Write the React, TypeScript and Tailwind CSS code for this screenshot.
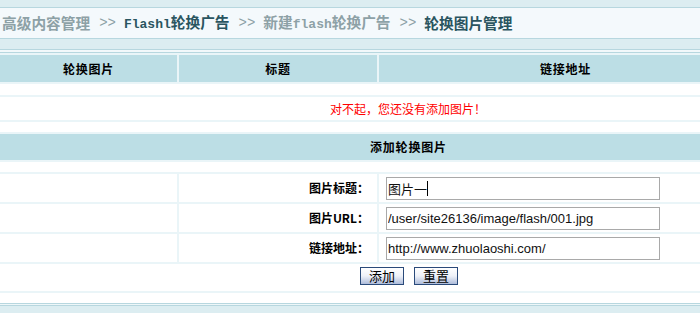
import React from 'react';

const cjk = "[font-family:'Noto_Sans_CJK_SC','Noto_Sans',sans-serif]";
const mono = "[font-family:'Liberation_Mono','Noto_Sans_CJK_SC',monospace]";

const Sep = () => (
  <span className={`${mono} text-[14px] font-normal text-[#8da1a6] ml-[9px] mr-[8px]`}>&gt;&gt;</span>
);

const fields = [
  { label: '图片标题：', value: '图片一', caret: true },
  { label: '图片URL：', value: '/user/site26136/image/flash/001.jpg' },
  { label: '链接地址：', value: 'http://www.zhuolaoshi.com/' },
];

const Button = ({ children }: { children: React.ReactNode }) => (
  <button
    type="button"
    className={`${cjk} w-[44px] h-[18px] border border-[#2a4a7a] bg-gradient-to-b from-white via-[#eef1f8] to-[#aebcda] text-[13px] leading-[16px] text-black`}
  >
    {children}
  </button>
);

export default function App() {
  return (
    <div className={`${cjk} w-[700px] h-[313px] overflow-hidden bg-[#dcedf1]`}>
      <div className="h-[7px]" />

      {/* breadcrumb */}
      <div className="h-[32px] border-y border-[#b7d7df] bg-[#f4f9fc] flex items-center pl-[2px] text-[14.7px] font-bold whitespace-nowrap">
        <span className="text-[#8da1a6]">高级内容管理</span>
        <Sep />
        <span className="text-[#2a5560]">
          <span className={`${mono} text-[13px]`}>Flashl</span>轮换广告
        </span>
        <Sep />
        <span className="text-[#8da1a6]">
          新建<span className={`${mono} text-[13px]`}>flash</span>轮换广告
        </span>
        <Sep />
        <span className="text-[#2a5560]">轮换图片管理</span>
      </div>

      <div className="h-[10px]" />
      <div className="h-[4px] border-y border-[#b7d7df] bg-[#f2f8fa]" />

      {/* table */}
      <div className="bg-[#eaf5f8] pt-[2px] flex flex-col gap-[2px] w-[752px]">
        <div className="grid grid-cols-[177px_198px_373px] gap-x-[2px] h-[27px] text-[12px] font-bold tracking-[0.7px] text-black">
          <div className="bg-[#bcdee5] flex items-center justify-center">轮换图片</div>
          <div className="bg-[#bcdee5] flex items-center justify-center">标题</div>
          <div className="bg-[#bcdee5] flex items-center justify-center">链接地址</div>
        </div>

        <div className="h-[11px] bg-white" />
        <div className="h-[23px] bg-white flex items-center pl-[330px] text-[12px] text-[#ff0000]">
          对不起，您还没有添加图片！
        </div>
        <div className="h-[10px] bg-white" />

        <div className="h-[26px] bg-[#bcdee5] flex items-center pl-[370px] text-[12px] font-bold tracking-[0.8px] text-black">
          添加轮换图片
        </div>
        <div className="h-[10px] bg-white" />

        {fields.map((f) => (
          <div key={f.label} className="grid grid-cols-[177px_198px_373px] gap-x-[2px] h-[28px]">
            <div className="bg-white" />
            <div className="bg-white flex items-center justify-end pr-[8px] text-[12px] font-bold text-black">
              {f.label}
            </div>
            <div className="bg-white pl-[7px] flex items-center">
              <div className="relative w-[274px] h-[23px]">
                <input
                  readOnly
                  value={f.value}
                  className="block w-full h-full border border-[#a9a9a9] bg-white px-[1px] text-[13px] text-[#111] outline-none [font-family:'Liberation_Sans','Noto_Sans_CJK_SC',sans-serif]"
                />
                {f.caret && <span className="absolute left-[41px] top-[4px] w-[1px] h-[15px] bg-black" />}
              </div>
            </div>
          </div>
        ))}

        <div className="h-[27px] bg-white flex gap-[10px] pl-[360px] pt-[3px]">
          <Button>添加</Button>
          <Button>重置</Button>
        </div>
        <div className="h-[10px] bg-white" />
      </div>

      <div className="h-[3px] border-y border-[#b7d7df] bg-[#eef7f9]" />
    </div>
  );
}
